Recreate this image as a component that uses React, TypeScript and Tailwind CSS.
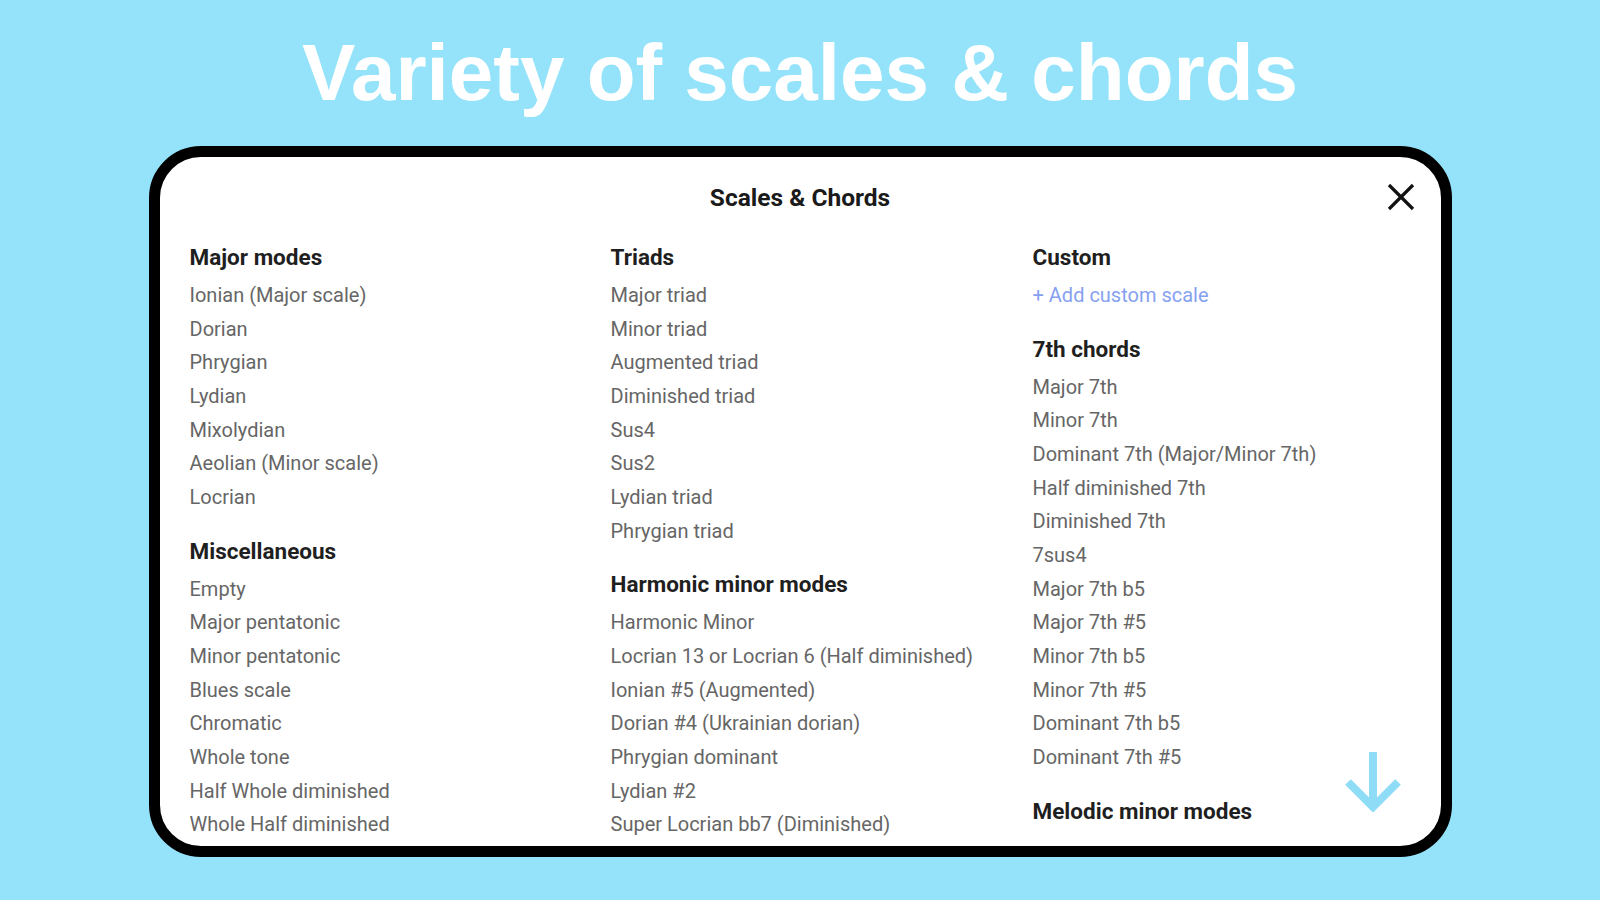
import React from 'react';

type Section = {
  title: string;
  items: string[];
  link?: string;
};

const COLUMNS: Section[][] = [
  [
    {
      title: 'Major modes',
      items: ['Ionian (Major scale)', 'Dorian', 'Phrygian', 'Lydian', 'Mixolydian', 'Aeolian (Minor scale)', 'Locrian'],
    },
    {
      title: 'Miscellaneous',
      items: [
        'Empty',
        'Major pentatonic',
        'Minor pentatonic',
        'Blues scale',
        'Chromatic',
        'Whole tone',
        'Half Whole diminished',
        'Whole Half diminished',
      ],
    },
  ],
  [
    {
      title: 'Triads',
      items: ['Major triad', 'Minor triad', 'Augmented triad', 'Diminished triad', 'Sus4', 'Sus2', 'Lydian triad', 'Phrygian triad'],
    },
    {
      title: 'Harmonic minor modes',
      items: [
        'Harmonic Minor',
        'Locrian 13 or Locrian 6 (Half diminished)',
        'Ionian #5 (Augmented)',
        'Dorian #4 (Ukrainian dorian)',
        'Phrygian dominant',
        'Lydian #2',
        'Super Locrian bb7 (Diminished)',
      ],
    },
  ],
  [
    { title: 'Custom', items: [], link: '+ Add custom scale' },
    {
      title: '7th chords',
      items: [
        'Major 7th',
        'Minor 7th',
        'Dominant 7th (Major/Minor 7th)',
        'Half diminished 7th',
        'Diminished 7th',
        '7sus4',
        'Major 7th b5',
        'Major 7th #5',
        'Minor 7th b5',
        'Minor 7th #5',
        'Dominant 7th b5',
        'Dominant 7th #5',
      ],
    },
    { title: 'Melodic minor modes', items: [] },
  ],
];

const SectionBlock: React.FC<{ section: Section }> = ({ section }) => (
  <div className="flex flex-col">
    <div className="h-[34px] leading-[34px] mb-[5px] text-[22.5px] font-bold text-[#1f1f1f] whitespace-nowrap">
      {section.title}
    </div>
    {section.link && (
      <div className="h-[33.67px] leading-[33.67px] text-[20px] text-[#86a1f0] whitespace-nowrap">{section.link}</div>
    )}
    {section.items.map((item) => (
      <div key={item} className="h-[33.67px] leading-[33.67px] text-[20px] text-[#666666] whitespace-nowrap">
        {item}
      </div>
    ))}
  </div>
);

export default function App() {
  return (
    <div className="w-full h-[900px] bg-[#94e3fa] flex flex-col items-center overflow-hidden">
      <h1 className="pt-[33px] text-[80px] leading-none font-bold text-white font-['Liberation_Sans',Arial,sans-serif]">
        Variety of scales &amp; chords
      </h1>

      <div className="relative mt-[33px] w-[1303px] h-[711px] shrink-0 border-[11px] border-black rounded-[52px] bg-white overflow-hidden font-['Roboto','Noto_Sans',sans-serif]">
        <div className="pt-[24px] px-[30px]">
          <div className="h-[34px] leading-[34px] text-center text-[24.5px] font-bold text-[#1a1a1a]">Scales &amp; Chords</div>

          <div className="mt-[25px] grid grid-cols-[421px_422px_1fr]">
            {COLUMNS.map((col, i) => (
              <div key={i} className="flex flex-col gap-[19px]">
                {col.map((section) => (
                  <SectionBlock key={section.title} section={section} />
                ))}
              </div>
            ))}
          </div>
        </div>

        {/* close button */}
        <button className="absolute top-[26px] right-[26px] w-[28px] h-[28px]">
          <svg width="28" height="28" viewBox="0 0 28 28" fill="none" stroke="#111" strokeWidth="3.2">
            <line x1="2" y1="2" x2="26" y2="26" />
            <line x1="26" y1="2" x2="2" y2="26" />
          </svg>
        </button>

        {/* scroll hint */}
        <div className="absolute right-[40px] bottom-[34px]">
          <svg width="56" height="60" viewBox="0 0 56 60" fill="none" stroke="#8edcf6" strokeWidth="8">
            <line x1="28" y1="0" x2="28" y2="52" />
            <polyline points="3,30 28,55 53,30" />
          </svg>
        </div>
      </div>
    </div>
  );
}
